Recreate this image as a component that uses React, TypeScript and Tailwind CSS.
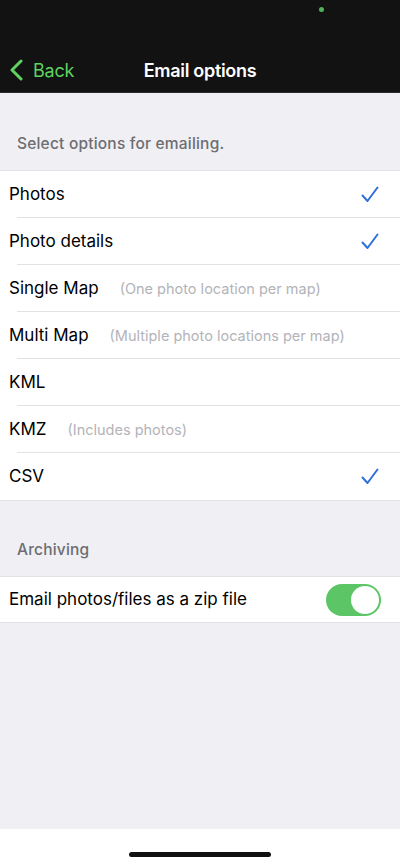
import React from "react";

const Check = () => (
  <svg width="18" height="17" viewBox="0 0 18 17" fill="none">
    <path d="M1.5 9.5 L6.5 15 L16.5 1.5" stroke="#2f6fdc" strokeWidth="2" strokeLinecap="round" strokeLinejoin="round" />
  </svg>
);

type Row = { label: string; note?: string; checked?: boolean };

const rows: Row[] = [
  { label: "Photos", checked: true },
  { label: "Photo details", checked: true },
  { label: "Single Map", note: "(One photo location per map)" },
  { label: "Multi Map", note: "(Multiple photo locations per map)" },
  { label: "KML" },
  { label: "KMZ", note: "(Includes photos)" },
  { label: "CSV", checked: true },
];

export default function App() {
  return (
    <div
      className="w-[400px] h-[866px] flex flex-col bg-[#efeff4] overflow-hidden"
      style={{ fontFamily: "Inter, 'Noto Sans', sans-serif" }}
    >
      {/* Status + nav bar */}
      <div className="h-[93px] bg-[#121212] border-b border-[#2a2a2a] flex flex-col">
        <div className="h-[48px] relative">
          <div className="absolute left-[319px] top-[7px] w-[5px] h-[5px] rounded-full bg-[#4fb35a]" />
        </div>
        <div className="h-[44px] relative flex items-center">
          <div className="flex items-center pl-[10px] gap-[10px]">
            <svg width="13" height="22" viewBox="0 0 13 22" fill="none">
              <path d="M11 2 L2 11 L11 20" stroke="#5fd35f" strokeWidth="3" strokeLinecap="round" strokeLinejoin="round" />
            </svg>
            <span className="text-[18px] text-[#5fd35f] tracking-[-0.2px]">Back</span>
          </div>
          <div className="absolute inset-0 flex items-center justify-center pointer-events-none">
            <span className="text-[18px] font-semibold text-white tracking-[-0.3px]">Email options</span>
          </div>
        </div>
      </div>

      {/* Section 1 header */}
      <div className="h-[77px] flex items-end pb-[15px] pl-[17px]">
        <span className="text-[15.5px] font-medium text-[#6d6d72] tracking-[0.2px]">Select options for emailing.</span>
      </div>

      {/* Section 1 list */}
      <div className="bg-white border-t border-b border-[#e2e2e6]">
        {rows.map((r, i) => (
          <div key={r.label} className="relative h-[47px] flex items-center pl-[9px] pr-[21px]">
            <span className="text-[17px] text-black">{r.label}</span>
            {r.note && <span className="ml-[21px] text-[14.5px] text-[#b3b3b8]">{r.note}</span>}
            <div className="flex-1" />
            {r.checked && <Check />}
            {i < rows.length - 1 && (
              <div className="absolute left-[17px] right-0 bottom-0 h-px bg-[#e2e2e6]" />
            )}
          </div>
        ))}
      </div>

      {/* Section 2 header */}
      <div className="h-[75px] flex items-end pb-[15px] pl-[17px]">
        <span className="text-[15.5px] font-medium text-[#6d6d72] tracking-[0.2px]">Archiving</span>
      </div>

      {/* Section 2 list */}
      <div className="bg-white border-t border-b border-[#e2e2e6]">
        <div className="h-[45px] flex items-center pl-[9px] pr-[19px]">
          <span className="text-[17px] text-black">Email photos/files as a zip file</span>
          <div className="flex-1" />
          <div className="w-[55px] h-[32px] rounded-full bg-[#5cc565] p-[2px] flex justify-end">
            <div className="w-[28px] h-[28px] rounded-full bg-white" />
          </div>
        </div>
      </div>

      <div className="flex-1" />

      {/* Home indicator area */}
      <div className="h-[37px] bg-white flex items-start justify-center pt-[23px]">
        <div className="w-[142px] h-[5px] rounded-full bg-[#111]" />
      </div>
    </div>
  );
}
